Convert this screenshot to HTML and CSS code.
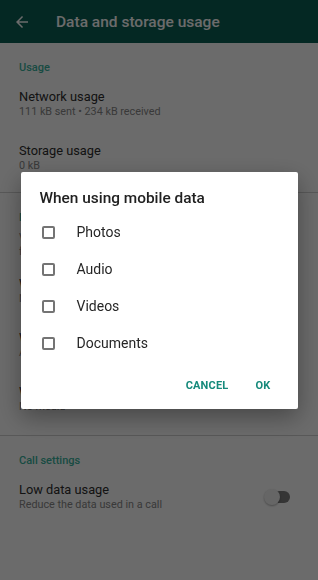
FILE: index.html
```html
<!DOCTYPE html>
<html lang="en">
<head>
<meta charset="utf-8">
<title>Data and storage usage</title>
<link rel="stylesheet" href="styles.css">
</head>
<body>
<div class="screen">
  <header class="appbar">
    <svg class="back" viewBox="0 0 24 24" width="18" height="18" aria-hidden="true">
      <path d="M20 11H7.83l5.59-5.59L12 4l-8 8 8 8 1.41-1.41L7.83 13H20v-2z" fill="currentColor"/>
    </svg>
    <h1 class="appbar-title">Data and storage usage</h1>
  </header>

  <main class="list">
    <section class="group group-usage">
      <h2 class="group-title">Usage</h2>
      <div class="item">
        <div class="item-text">
          <div class="item-title">Network usage</div>
          <div class="item-sub">111 kB sent • 234 kB received</div>
        </div>
      </div>
      <div class="item">
        <div class="item-text">
          <div class="item-title">Storage usage</div>
          <div class="item-sub">0 kB</div>
        </div>
      </div>
    </section>

    <section class="group group-media">
      <h2 class="group-title">Media auto-download</h2>
      <p class="group-desc">Voice messages are always automatically downloaded for the best communication experience</p>
      <div class="item">
        <div class="item-text">
          <div class="item-title">When using mobile data</div>
          <div class="item-sub">No media</div>
        </div>
      </div>
      <div class="item">
        <div class="item-text">
          <div class="item-title">When connected on Wi-Fi</div>
          <div class="item-sub">All media</div>
        </div>
      </div>
      <div class="item">
        <div class="item-text">
          <div class="item-title">When roaming</div>
          <div class="item-sub">No media</div>
        </div>
      </div>
    </section>

    <section class="group group-call">
      <h2 class="group-title">Call settings</h2>
      <div class="item item-switch">
        <div class="item-text">
          <div class="item-title">Low data usage</div>
          <div class="item-sub">Reduce the data used in a call</div>
        </div>
        <span class="switch"><span class="switch-thumb"></span></span>
      </div>
    </section>
  </main>

  <div class="scrim">
    <div class="dialog" role="dialog">
      <h3 class="dialog-title">When using mobile data</h3>
      <ul class="options">
        <li class="option"><span class="checkbox"></span><span class="option-label">Photos</span></li>
        <li class="option"><span class="checkbox"></span><span class="option-label">Audio</span></li>
        <li class="option"><span class="checkbox"></span><span class="option-label">Videos</span></li>
        <li class="option"><span class="checkbox"></span><span class="option-label">Documents</span></li>
      </ul>
      <div class="actions">
        <button class="btn">CANCEL</button>
        <button class="btn btn-ok">OK</button>
      </div>
    </div>
  </div>
</div>
</body>
</html>
```

FILE: styles.css
```css
* { box-sizing: border-box; }

html, body {
  margin: 0;
  padding: 0;
}

body {
  width: 318px;
  height: 580px;
  overflow: hidden;
  font-family: Roboto, "Noto Sans", Arial, sans-serif;
  background: #ffffff;
}

.screen {
  width: 318px;
  height: 580px;
  background: #ffffff;
  display: flex;
  flex-direction: column;
}

/* App bar */
.appbar {
  height: 43px;
  flex: 0 0 43px;
  display: flex;
  align-items: center;
  padding-left: 13px;
  background: #0b5f55;
  color: #ffffff;
}

.back {
  display: block;
  color: #ffffff;
}

.appbar-title {
  margin: 0 0 0 25px;
  font-size: 15.5px;
  font-weight: 500;
  line-height: 20px;
  color: #ffffff;
}

/* List */
.list {
  display: flex;
  flex-direction: column;
}

.group {
  border-bottom: 1px solid #d2d2d2;
}

.group-usage { padding-bottom: 7px; }
.group-media { padding-bottom: 9px; }
.group-call { border-bottom: 0; }

.group-title {
  margin: 0;
  padding: 18px 19px 2px;
  font-size: 11px;
  line-height: 14px;
  font-weight: 500;
  color: #3bb39e;
}

.group-desc {
  margin: 0;
  padding: 4px 40px 6px 19px;
  font-size: 10.5px;
  line-height: 13.5px;
  color: #8a8a8a;
}

.item {
  display: flex;
  align-items: center;
  justify-content: space-between;
  padding: 12px 19px;
}

.item-switch { padding-right: 28px; }

.item-title {
  font-size: 12.8px;
  line-height: 16px;
  color: #2e2e2e;
}

.item-sub {
  font-size: 10.8px;
  line-height: 14px;
  color: #888888;
}

/* Switch */
.switch {
  position: relative;
  width: 26px;
  height: 16px;
  display: block;
}

.switch::before {
  content: "";
  position: absolute;
  left: 1px;
  right: 0;
  top: 2px;
  height: 12px;
  border-radius: 6px;
  background: #7e7e7e;
}

.switch-thumb {
  position: absolute;
  left: 0;
  top: 0;
  width: 16px;
  height: 16px;
  border-radius: 50%;
  background: #f2f2f2;
  box-shadow: 0 1px 2px rgba(0,0,0,0.3);
}

/* Scrim & dialog */
.scrim {
  position: fixed;
  inset: 0;
  background: rgba(0, 0, 0, 0.58);
  display: flex;
  align-items: center;
  justify-content: center;
}

.dialog {
  width: 277px;
  background: #ffffff;
  border-radius: 2px;
  padding: 16px 0 5px;
  box-shadow: 0 8px 24px rgba(0,0,0,0.35);
}

.dialog-title {
  margin: 0;
  padding: 0 19px;
  font-size: 15.4px;
  line-height: 20px;
  font-weight: 500;
  color: #212121;
}

.options {
  list-style: none;
  margin: 6px 0 0;
  padding: 0;
}

.option {
  height: 37px;
  display: flex;
  align-items: center;
  padding-left: 21px;
}

.checkbox {
  width: 13px;
  height: 13px;
  border: 2px solid #747474;
  border-radius: 2px;
  flex: 0 0 13px;
}

.option-label {
  margin-left: 22px;
  font-size: 14px;
  color: #262626;
}

.actions {
  margin-top: 6px;
  height: 36px;
  display: flex;
  justify-content: flex-end;
  align-items: center;
  gap: 11px;
  padding-right: 19px;
}

.btn {
  border: 0;
  background: transparent;
  padding: 0 8px;
  height: 36px;
  font-family: Roboto, "Noto Sans", Arial, sans-serif;
  font-size: 11px;
  font-weight: 700;
  color: #168a7b;
  letter-spacing: 0.2px;
}
```
